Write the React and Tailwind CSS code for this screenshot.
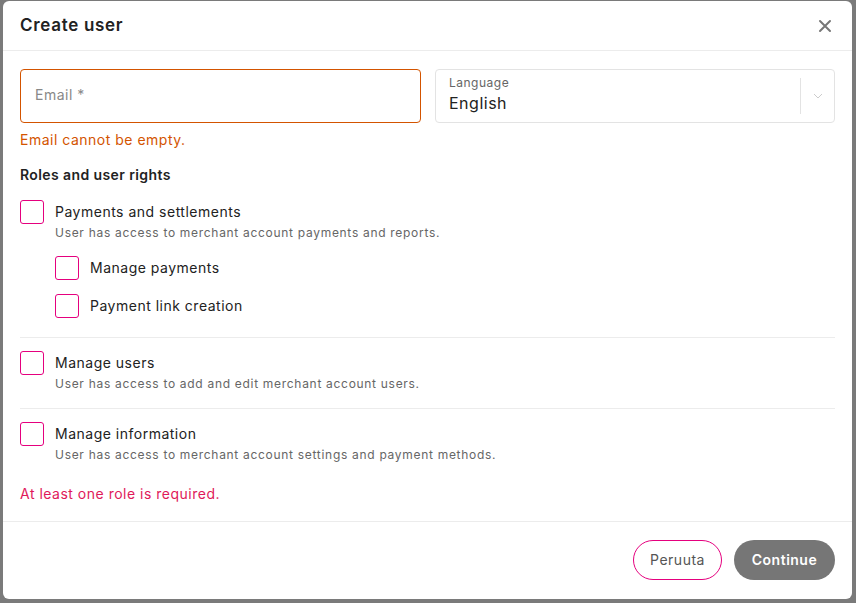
import React from "react";

function Box() {
  return <div className="w-6 h-6 shrink-0 rounded-[3px] border border-[#e5007e] bg-white" />;
}

function Role({ title, desc }) {
  return (
    <div className="flex">
      <Box />
      <div className="ml-[11px]">
        <div className="text-[14px] leading-[23px] tracking-[0.5px] text-[#222]">{title}</div>
        {desc && <div className="text-[12px] leading-4 tracking-[0.7px] text-[#666] mt-[2px]">{desc}</div>}
      </div>
    </div>
  );
}

export default function App() {
  return (
    <div
      className="w-[856px] h-[603px] bg-[#7a7a7a] pt-[1px] pl-[3px]"
      style={{ fontFamily: "Inter, 'Liberation Sans', sans-serif" }}
    >
      <div className="w-[849px] h-[598px] bg-white rounded-[6px] flex flex-col">
        <div className="h-[50px] border-b border-[#ececec] flex items-center justify-between pl-[17px] pr-[20px]">
          <div className="text-[17px] font-semibold tracking-[0.7px] text-[#222]">Create user</div>
          <svg width="14" height="14" viewBox="0 0 14 14">
            <path d="M2 2 L12 12 M12 2 L2 12" stroke="#777" strokeWidth="2" strokeLinecap="round" />
          </svg>
        </div>
        <div className="flex-1 px-[17px] pt-[18px]">
          <div className="flex gap-[14px]">
            <div className="w-[401px] h-[54px] rounded-[4px] border border-[#d35400] flex items-center pb-[4px] px-[14px] text-[14px] tracking-[0.5px] text-[#888]">
              Email *
            </div>
            <div className="flex-1 h-[54px] rounded-[4px] border border-[#e3e3e3] flex items-stretch">
              <div className="flex-1 pl-[13px] pt-[5px]">
                <div className="text-[12px] leading-4 tracking-[0.5px] text-[#666]">Language</div>
                <div className="text-[16px] leading-6 tracking-[0.5px] text-[#222]">English</div>
              </div>
              <div className="w-px bg-[#e3e3e3] my-[8px]" />
              <div className="w-[33px] flex items-center justify-center">
                <svg width="10" height="6" viewBox="0 0 10 6">
                  <path d="M1 1 L5 5 L9 1" fill="none" stroke="#ccc" strokeWidth="1" />
                </svg>
              </div>
            </div>
          </div>
          <div className="text-[14px] tracking-[0.5px] text-[#d35400] mt-[7px] leading-5">Email cannot be empty.</div>
          <div className="text-[14px] font-semibold tracking-[0.4px] text-[#222] mt-[15px] leading-5">Roles and user rights</div>
          <div className="mt-[15px]">
            <Role title="Payments and settlements" desc="User has access to merchant account payments and reports." />
            <div className="pl-[35px] mt-[15px] flex flex-col gap-[14px]">
              <Role title="Manage payments" />
              <Role title="Payment link creation" />
            </div>
          </div>
          <div className="h-px bg-[#ececec] mt-[19px]" />
          <div className="mt-[13px]">
            <Role title="Manage users" desc="User has access to add and edit merchant account users." />
          </div>
          <div className="h-px bg-[#ececec] mt-[16px]" />
          <div className="mt-[13px]">
            <Role title="Manage information" desc="User has access to merchant account settings and payment methods." />
          </div>
          <div className="text-[14px] tracking-[0.5px] text-[#e0195a] mt-[21px] leading-5">At least one role is required.</div>
        </div>
        <div className="h-[78px] border-t border-[#ececec] flex items-center justify-end gap-[12px] pr-[17px] pb-[2px]">
          <div className="h-[40px] w-[89px] rounded-full border border-[#e5007e] flex items-center justify-center text-[14px] tracking-[0.5px] text-[#555]">
            Peruuta
          </div>
          <div className="h-[40px] w-[101px] rounded-full bg-[#767676] flex items-center justify-center text-[14px] font-semibold tracking-[0.5px] text-white">
            Continue
          </div>
        </div>
      </div>
    </div>
  );
}
